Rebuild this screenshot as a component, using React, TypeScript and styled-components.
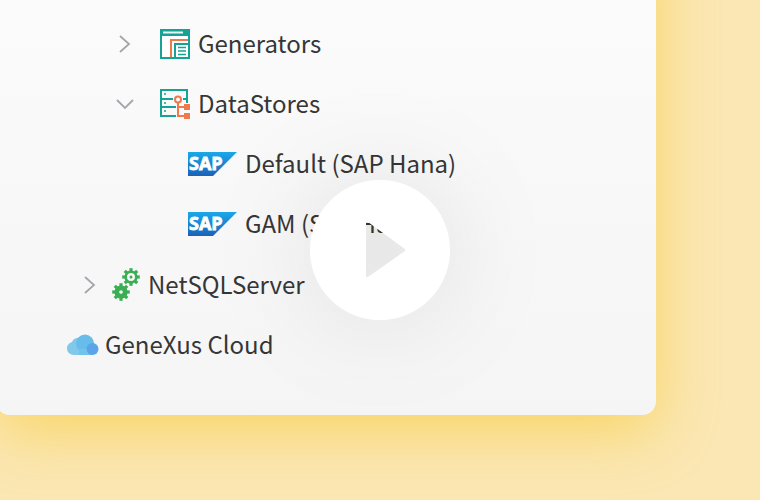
import React from "react";
import styled, { createGlobalStyle } from "styled-components";

const GlobalStyle = createGlobalStyle`
  * { box-sizing: border-box; }
  body {
    margin: 0;
    background: #fbe7b4;
    color: #363636;
    font-family: "Noto Sans CJK SC", "Noto Sans", sans-serif;
  }
`;

const Stage = styled.main`
  position: relative;
  min-height: 100vh;
  overflow: hidden;
`;

const Panel = styled.section`
  margin: -80px 104px 0 -4px;
  padding: 94px 24px 40px 71px;
  border-radius: 14px;
  background: linear-gradient(#fcfcfc, #f5f5f5);
  box-shadow: 0 16px 60px rgba(247, 206, 72, 0.74);
`;

const Branch = styled.ul<{ $indent?: number; $gap?: number }>`
  list-style: none;
  margin: ${(p) => p.$gap ?? 0}px 0 0;
  padding: 0 0 0 ${(p) => p.$indent ?? 0}px;
`;

const Row = styled.div<{ $gap: number }>`
  display: flex;
  align-items: center;
  gap: ${(p) => p.$gap}px;
  height: 60px;
`;

const Toggle = styled.button<{ $space: number }>`
  display: flex;
  align-items: center;
  justify-content: center;
  width: 20px;
  height: 24px;
  margin-right: ${(p) => p.$space}px;
  padding: 0;
  border: 0;
  background: none;
  cursor: pointer;
`;

const Glyph = styled.svg`
  display: block;
  flex: none;
`;

const Label = styled.span`
  padding-bottom: 3px;
  font-size: 24px;
  line-height: 36px;
  white-space: nowrap;
`;

const PlayButton = styled.button`
  position: absolute;
  top: 50%;
  left: 50%;
  width: 140px;
  height: 140px;
  margin: -70px 0 0 -70px;
  padding: 0;
  border: 0;
  border-radius: 50%;
  background: none;
  cursor: pointer;
`;

const PlayShape = styled.svg`
  display: block;
  overflow: visible;
  filter: drop-shadow(0 0 50px rgba(0, 0, 0, 0.1));
`;

function Chevron({ open, name, space }: { open?: boolean; name: string; space: number }) {
  return (
    <Toggle type="button" aria-label={name} aria-expanded={!!open} $space={space}>
      <Glyph width="20" height="20" viewBox="0 0 20 20" fill="none" stroke="#a3a7ac" strokeWidth="1.8">
        <path d={open ? "M2 6l8 8 8-8" : "M5 2l9 8-9 8"} />
      </Glyph>
    </Toggle>
  );
}

function GeneratorsIcon() {
  return (
    <Glyph width="30" height="30" viewBox="0 0 30 30" fill="none">
      <path d="M1 1h28v28H1z" fill="#fff" stroke="#15a396" strokeWidth="2" />
      <path d="M0 0h30v7H0z" fill="#15a396" />
      <path d="M3 3.500h20" stroke="#e4f7f4" strokeWidth="2" />
      <path d="M11 28V11H28" stroke="#f0784c" strokeWidth="2" />
      <path d="M15 29V15H29" stroke="#15a396" strokeWidth="2" />
      <path d="M18 18.500h8M18 22h8M18 25.500h8" stroke="#15a396" strokeWidth="1.700" />
    </Glyph>
  );
}

function DataStoresIcon() {
  return (
    <Glyph width="30" height="30" viewBox="0 0 30 30" fill="none">
      <path d="M16 27H1V1h26v13M1 10h12M1 18h15M23 10h4" stroke="#15a396" strokeWidth="2" />
      <path d="M4 5h2M4 14h2M4 22h2" stroke="#15a396" strokeWidth="1.600" />
      <g stroke="#f0784c" strokeWidth="2">
        <circle cx="18" cy="10.500" r="3" fill="#fbfbfb" />
        <path d="M18 14v13h7M18 18h7" />
      </g>
      <path d="M24 15h6v6h-6zM24 24h6v6h-6z" fill="#f0784c" />
    </Glyph>
  );
}

function SapLogo({ id }: { id: string }) {
  return (
    <Glyph width="49" height="24" viewBox="0 0 49 24">
      <defs>
        <linearGradient id={id} x1="0" y1="0" x2="0" y2="1">
          <stop offset="0" stopColor="#1ba9e8" />
          <stop offset="1" stopColor="#1b62b8" />
        </linearGradient>
      </defs>
      <path d="M0 0h49L25 24H0z" fill={`url(#${id})`} />
      <text
        x="1"
        y="18"
        fill="#fff"
        stroke="#fff"
        strokeWidth="0.800"
        fontFamily="Open Sans, Liberation Sans, sans-serif"
        fontWeight="700"
        fontSize="18"
      >
        SAP
      </text>
    </Glyph>
  );
}

const TEETH = [0, 45, 90, 135, 180, 225, 270, 315];

function Gear({ x, y, hole }: { x: number; y: number; hole: number }) {
  return (
    <g transform={`translate(${x} ${y})`}>
      {TEETH.map((angle) => (
        <path key={angle} d="M-1.600-8.800h3.200V-5h-3.200z" fill="#3aae52" transform={`rotate(${angle})`} />
      ))}
      <circle r={(6.6 + hole) / 2} fill="none" stroke="#3aae52" strokeWidth={6.6 - hole} />
    </g>
  );
}

function GearsIcon() {
  return (
    <Glyph width="28" height="34" viewBox="0 0 28 34">
      <Gear x={19} y={9} hole={4} />
      <circle cx="19" cy="9" r="1.500" fill="#3aae52" />
      <Gear x={9} y={24} hole={1.8} />
    </Glyph>
  );
}

function CloudIcon() {
  return (
    <Glyph width="32" height="22" viewBox="0 0 32 22">
      <path d="M7 21a6.600 6.600 0 0 1-2-13A6.500 6.500 0 0 1 12 4l10 4 4 13z" fill="#80c9eb" />
      <circle cx="18" cy="9.500" r="9" fill="#67bce9" />
      <path d="M12 15h14v6H12z" fill="#73c3ea" />
      <circle cx="25.500" cy="15" r="6" fill="#5aa5ea" />
    </Glyph>
  );
}

export default function App() {
  return (
    <>
      <GlobalStyle />
      <Stage>
        <Panel>
          <Branch>
            <li>
              <Branch $indent={48}>
                <li>
                  <Row $gap={8}>
                    <Chevron name="Expand Generators" space={17} />
                    <GeneratorsIcon />
                    <Label>Generators</Label>
                  </Row>
                </li>
                <li>
                  <Row $gap={8}>
                    <Chevron open name="Collapse DataStores" space={17} />
                    <DataStoresIcon />
                    <Label>DataStores</Label>
                  </Row>
                  <Branch $indent={73}>
                    <li>
                      <Row $gap={8}>
                        <SapLogo id="sap-default" />
                        <Label>Default (SAP Hana)</Label>
                      </Row>
                    </li>
                    <li>
                      <Row $gap={8}>
                        <SapLogo id="sap-gam" />
                        <Label>GAM (SAP Hana)</Label>
                      </Row>
                    </li>
                  </Branch>
                </li>
              </Branch>
            </li>
            <li>
              <Branch $indent={13} $gap={1}>
                <li>
                  <Row $gap={8}>
                    <Chevron name="Expand NetSQLServer" space={4} />
                    <GearsIcon />
                    <Label>NetSQLServer</Label>
                  </Row>
                </li>
              </Branch>
            </li>
            <li>
              <Row $gap={6}>
                <CloudIcon />
                <Label>GeneXus Cloud</Label>
              </Row>
            </li>
          </Branch>
        </Panel>
        <PlayButton type="button" aria-label="Play video">
          <PlayShape width="140" height="140" viewBox="0 0 140 140">
            <path
              fill="#fff"
              fillRule="evenodd"
              d="M70 0a70 70 0 1 1 0 140a70 70 0 0 1 0-140zM56 43v53q0 2 2 1l37-26q1-1 0-2L58 42q-2-1-2 1z"
            />
          </PlayShape>
        </PlayButton>
      </Stage>
    </>
  );
}
